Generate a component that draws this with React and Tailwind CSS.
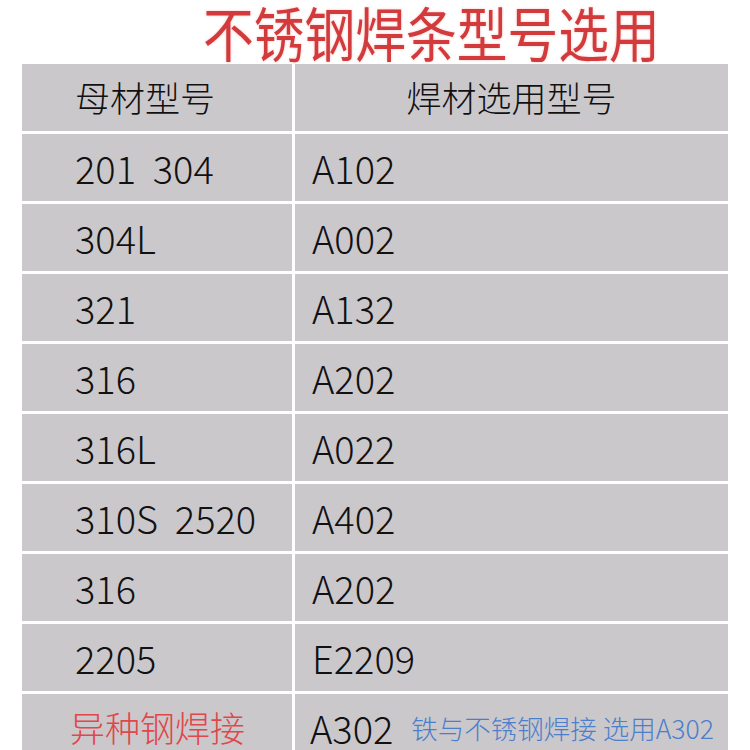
const rows = [
  ["201\u00a0\u00a0304", "A102"],
  ["304L", "A002"],
  ["321", "A132"],
  ["316", "A202"],
  ["316L", "A022"],
  ["310S\u00a0\u00a02520", "A402"],
  ["316", "A202"],
  ["2205", "E2209"],
]

const font = { fontFamily: '"Noto Sans CJK SC", "Noto Sans", sans-serif' }

export default function App() {
  return (
    <div className="w-[750px] h-[750px] overflow-hidden bg-white" style={font}>
      <h1 className="h-[64px] pl-[203px] text-[59px] leading-[64px] text-[#d23a3c] font-normal [text-shadow:0_0_3px_#f6c2c2]">
        <span className="inline-block origin-left scale-x-[0.86]">不锈钢焊条型号选用</span>
      </h1>
      <div className="ml-[22px] w-[706px] grid grid-cols-[270px_1fr] gap-[3px] bg-white font-light">
        <div className="h-[67px] bg-[#cbc8cc] flex items-center pl-[53px] text-[35px] text-[#111]">
          母材型号
        </div>
        <div className="h-[67px] bg-[#cbc8cc] flex items-center justify-center text-[35px] text-[#111]">
          焊材选用型号
        </div>
        {rows.map((r, i) => (
          <div key={i} className="contents">
            <div className="h-[67px] bg-[#cbc8cc] flex items-center pl-[53px] text-[38px] text-[#111]">
              {r[0]}
            </div>
            <div className="h-[67px] bg-[#cbc8cc] flex items-center pl-[17px] text-[38px] text-[#111]">
              {r[1]}
            </div>
          </div>
        ))}
        <div className="h-[67px] bg-[#cbc8cc] flex items-center pl-[48px] text-[35px] text-[#e0474a]">
          异种钢焊接
        </div>
        <div className="h-[67px] bg-[#cbc8cc] flex items-center pl-[15px] text-[#111]">
          <span className="text-[38px]">A302</span>
          <span className="ml-[18px] text-[26.5px] text-[#4b7fcb]">铁与不锈钢焊接 选用A302</span>
        </div>
      </div>
    </div>
  )
}
